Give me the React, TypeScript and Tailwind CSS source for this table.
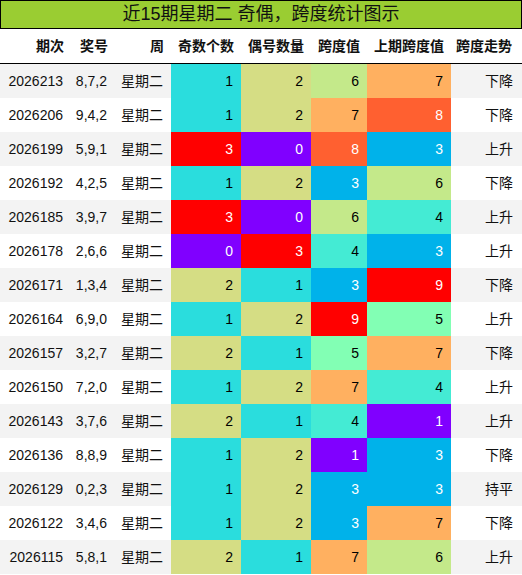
const ODD: Record<number, string> = {
  0: "bg-[#8000ff] text-white",
  1: "bg-[#2adddd] text-black",
  2: "bg-[#d5dd84] text-black",
  3: "bg-[#ff0000] text-white",
};

const SPAN: Record<number, string> = {
  1: "bg-[#8000ff] text-white",
  3: "bg-[#00b2ea] text-white",
  4: "bg-[#44ebd4] text-black",
  5: "bg-[#82ffb4] text-black",
  6: "bg-[#c4e98a] text-black",
  7: "bg-[#ffb060] text-black",
  8: "bg-[#ff6030] text-white",
  9: "bg-[#ff0000] text-white",
};

type Row = [string, string, number, number, number, number, string];

const rows: Row[] = [
  ["2026213", "8,7,2", 1, 2, 6, 7, "下降"],
  ["2026206", "9,4,2", 1, 2, 7, 8, "下降"],
  ["2026199", "5,9,1", 3, 0, 8, 3, "上升"],
  ["2026192", "4,2,5", 1, 2, 3, 6, "下降"],
  ["2026185", "3,9,7", 3, 0, 6, 4, "上升"],
  ["2026178", "2,6,6", 0, 3, 4, 3, "上升"],
  ["2026171", "1,3,4", 2, 1, 3, 9, "下降"],
  ["2026164", "6,9,0", 1, 2, 9, 5, "上升"],
  ["2026157", "3,2,7", 2, 1, 5, 7, "下降"],
  ["2026150", "7,2,0", 1, 2, 7, 4, "上升"],
  ["2026143", "3,7,6", 2, 1, 4, 1, "上升"],
  ["2026136", "8,8,9", 1, 2, 1, 3, "下降"],
  ["2026129", "0,2,3", 1, 2, 3, 3, "持平"],
  ["2026122", "3,4,6", 1, 2, 3, 7, "下降"],
  ["2026115", "5,8,1", 2, 1, 7, 6, "上升"],
];

const cols = "grid grid-cols-[71px_44px_56px_70px_70px_56px_84px_71px]";
const headers = ["期次", "奖号", "周", "奇数个数", "偶号数量", "跨度值", "上期跨度值", "跨度走势"];

export default function App() {
  return (
    <div
      className="w-[522px] h-[575px] bg-white text-[14px] text-[#111]"
      style={{ fontFamily: '"Liberation Sans", "Noto Sans CJK SC", sans-serif' }}
    >
      <div className="h-[29px] border border-black bg-[#9acd32] text-center text-[18px] leading-[26px]">
        近15期星期二 奇偶，跨度统计图示
      </div>
      <div className={`${cols} h-[35px] border-b border-black font-bold items-center`}>
        {headers.map((h, i) => (
          <div key={h} className={`text-right ${i === 7 ? "pr-[10px]" : "pr-[7px]"}`}>
            {h}
          </div>
        ))}
      </div>
      {rows.map((r, i) => (
        <div key={r[0]} className={`${cols} h-[34px] ${i % 2 === 0 ? "bg-[#f3f3f3]" : "bg-white"}`}>
          <div className="flex items-center justify-end pr-[8px]">{r[0]}</div>
          <div className="flex items-center justify-end pr-[8px]">{r[1]}</div>
          <div className="flex items-center justify-end pr-[8px]">星期二</div>
          <div className={`flex items-center justify-end pr-[8px] ${ODD[r[2]]}`}>{r[2]}</div>
          <div className={`flex items-center justify-end pr-[8px] ${ODD[r[3]]}`}>{r[3]}</div>
          <div className={`flex items-center justify-end pr-[8px] ${SPAN[r[4]]}`}>{r[4]}</div>
          <div className={`flex items-center justify-end pr-[8px] ${SPAN[r[5]]}`}>{r[5]}</div>
          <div className="flex items-center justify-end pr-[9px]">{r[6]}</div>
        </div>
      ))}
    </div>
  );
}
